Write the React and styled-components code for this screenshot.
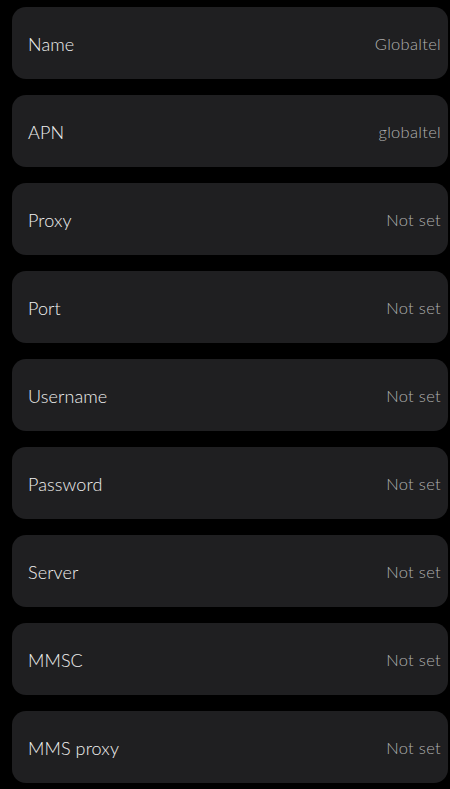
import React from "react";
import styled, { createGlobalStyle } from "styled-components";

const Global = createGlobalStyle`
  html, body { margin: 0; padding: 0; background: #000; }
  body { font-family: "Lato", "Noto Sans", sans-serif; }
`;

const List = styled.div`
  display: flex;
  flex-direction: column;
  gap: 16px;
  padding: 7px 2px 0 12px;
`;

const Row = styled.div`
  height: 72px;
  box-sizing: border-box;
  background: #1f1f21;
  border-radius: 14px;
  display: flex;
  align-items: center;
  justify-content: space-between;
  padding: 1px 7px 0 16px;
`;

const Label = styled.span`
  color: #f0f0f0;
  font-size: 18px;
  font-weight: 300;
  letter-spacing: 0.1px;
`;

const Value = styled.span`
  color: #b0b0b0;
  font-size: 16.5px;
  font-weight: 300;
  letter-spacing: 0.3px;
`;

const rows = [
  ["Name", "Globaltel"],
  ["APN", "globaltel"],
  ["Proxy", "Not set"],
  ["Port", "Not set"],
  ["Username", "Not set"],
  ["Password", "Not set"],
  ["Server", "Not set"],
  ["MMSC", "Not set"],
  ["MMS proxy", "Not set"],
];

export default function App() {
  return (
    <>
      <Global />
      <List>
        {rows.map(([l, v]) => (
          <Row key={l}>
            <Label>{l}</Label>
            <Value>{v}</Value>
          </Row>
        ))}
      </List>
    </>
  );
}
